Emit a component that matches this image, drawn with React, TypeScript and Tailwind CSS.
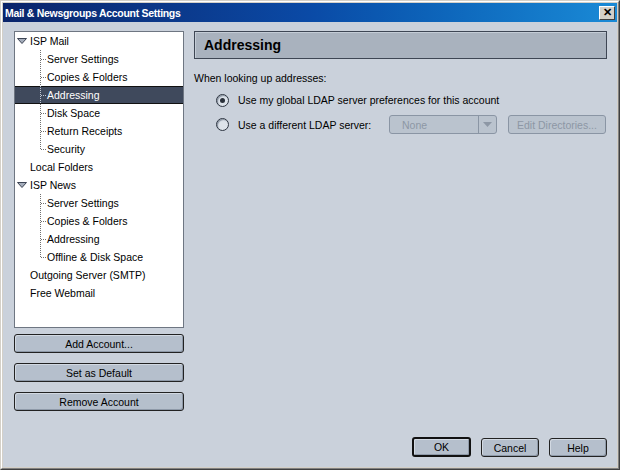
import React from 'react'

type TreeItem = {
  label: string
  level: 0 | 1
  expanded?: boolean
  last?: boolean
  selected?: boolean
}

const tree: TreeItem[] = [
  { label: 'ISP Mail', level: 0, expanded: true },
  { label: 'Server Settings', level: 1 },
  { label: 'Copies & Folders', level: 1 },
  { label: 'Addressing', level: 1, selected: true },
  { label: 'Disk Space', level: 1 },
  { label: 'Return Receipts', level: 1 },
  { label: 'Security', level: 1, last: true },
  { label: 'Local Folders', level: 0 },
  { label: 'ISP News', level: 0, expanded: true },
  { label: 'Server Settings', level: 1 },
  { label: 'Copies & Folders', level: 1 },
  { label: 'Addressing', level: 1 },
  { label: 'Offline & Disk Space', level: 1, last: true },
  { label: 'Outgoing Server (SMTP)', level: 0 },
  { label: 'Free Webmail', level: 0 },
]

function Twisty() {
  return (
    <svg width="10" height="6" viewBox="0 0 10 6" className="shrink-0">
      <polygon points="0.5,0.5 9.5,0.5 5,5.5" fill="#a4adbb" stroke="#3c4454" strokeWidth="1" />
    </svg>
  )
}

function Connector({ last, light }: { last?: boolean; light?: boolean }) {
  const color = light ? '#c0c8d4' : '#707070'
  return (
    <svg width="6" height="18" viewBox="0 0 6 18" className="shrink-0">
      <line x1="0.5" y1="0" x2="0.5" y2={last ? 9 : 18} stroke={color} strokeDasharray="1 1" />
      <line x1="1" y1="9.5" x2="6" y2="9.5" stroke={color} strokeDasharray="1 1" />
    </svg>
  )
}

function TreeRow({ item }: { item: TreeItem }) {
  const base = 'flex h-[18px] items-center whitespace-nowrap'
  const sel = item.selected
    ? 'bg-[#3f495c] text-white border-y border-[#111]'
    : 'text-black'

  if (item.level === 1) {
    return (
      <div className={`${base} ${sel} pl-[25px]`}>
        <Connector last={item.last} light={item.selected} />
        <span className="ml-px">{item.label}</span>
      </div>
    )
  }

  return (
    <div className={`${base} ${sel} ${item.expanded ? 'pl-[2px]' : 'pl-[15px]'}`}>
      {item.expanded && <Twisty />}
      <span className={item.expanded ? 'ml-[3px]' : ''}>{item.label}</span>
    </div>
  )
}

function Button({
  children,
  className = '',
  isDefault = false,
}: {
  children: React.ReactNode
  className?: string
  isDefault?: boolean
}) {
  return (
    <button
      type="button"
      className={`flex items-center justify-center rounded-[3px] bg-[#b5bfcc] text-black shadow-[inset_1px_1px_0_#d2d9e2,inset_-1px_-1px_0_#8e99a8] ${
        isDefault ? 'border-2 border-[#111]' : 'border border-[#222]'
      } ${className}`}
    >
      {children}
    </button>
  )
}

function Radio({ checked }: { checked?: boolean }) {
  return (
    <span className="flex h-[13px] w-[13px] shrink-0 items-center justify-center rounded-full border border-[#2c3440] bg-[#dde3ea] shadow-[inset_1px_1px_1px_#8a94a2]">
      {checked && <span className="h-[5px] w-[5px] rounded-full bg-[#2a303a]" />}
    </span>
  )
}

export default function App() {
  return (
    <div className="h-[470px] w-[620px] font-['Liberation_Sans',Arial,sans-serif] text-[10.5px] leading-[14px]">
      <div className="flex h-full flex-col border border-t-[#d4d0c8] border-l-[#d4d0c8] border-r-[#404040] border-b-[#404040]">
        <div className="flex flex-1 flex-col border border-t-white border-l-white border-r-[#808080] border-b-[#808080] bg-[#d4d0c8] p-px">
          {/* title bar */}
          <div className="flex h-[19px] shrink-0 items-center justify-between bg-gradient-to-r from-[#0a246a] via-[#0a4aa6] to-[#1a8ad6] pl-[2px] pr-[2px]">
            <span className="text-[10.5px] font-bold tracking-[-0.3px] text-white">Mail &amp; Newsgroups Account Settings</span>
            <span className="flex h-[14px] w-[16px] items-center justify-center border border-t-white border-l-white border-r-[#404040] border-b-[#404040] bg-[#d4d0c8] text-[11px] font-bold leading-none text-black">
              ✕
            </span>
          </div>

          {/* body */}
          <div className="flex flex-1 bg-[#cad1db] pb-[10px] pl-[11px] pr-[10px] pt-[9px]">
            <div className="flex w-[170px] shrink-0 flex-col">
              <div className="h-[297px] border border-[#6e7682] bg-white">
                {tree.map((item, i) => (
                  <TreeRow key={i} item={item} />
                ))}
              </div>
              <Button className="mt-[6px] h-[19px] w-full">Add Account...</Button>
              <Button className="mt-[10px] h-[19px] w-full">Set as Default</Button>
              <Button className="mt-[10px] h-[19px] w-full">Remove Account</Button>
            </div>

            <div className="ml-[10px] flex flex-1 flex-col">
              <div className="flex h-[28px] items-center border border-[#3e4654] bg-[#a9b2be] pl-[9px] shadow-[inset_1px_1px_0_#c4ccd6]">
                <span className="text-[14px] font-bold text-black">Addressing</span>
              </div>

              <div className="mt-[12px] h-[14px] text-black">When looking up addresses:</div>

              <div className="mt-[7px] flex h-[16px] items-center pl-[22px]">
                <Radio checked />
                <span className="ml-[9px]">Use my global LDAP server preferences for this account</span>
              </div>

              <div className="mt-[7px] flex h-[19px] items-center pl-[22px]">
                <Radio />
                <span className="ml-[9px] w-[151px]">Use a different LDAP server:</span>
                <div className="flex h-[19px] w-[108px] items-stretch rounded-[3px] border border-[#8a95a4] bg-[#bac3ce] text-[#8d97a5]">
                  <span className="flex flex-1 items-center pl-[12px]">None</span>
                  <span className="flex w-[18px] items-center justify-center border-l border-[#8a95a4]">
                    <svg width="9" height="5" viewBox="0 0 9 5">
                      <polygon points="0,0 9,0 4.5,5" fill="#8d97a5" />
                    </svg>
                  </span>
                </div>
                <div className="ml-[11px] flex h-[19px] w-[98px] items-center justify-center rounded-[3px] border border-[#8a95a4] bg-[#bac3ce] text-[#8d97a5]">
                  Edit Directories...
                </div>
              </div>

              <div className="flex-1" />

              <div className="flex justify-end">
                <Button isDefault className="h-[20px] w-[59px]">OK</Button>
                <Button className="ml-[10px] mt-px h-[19px] w-[58px]">Cancel</Button>
                <Button className="ml-[10px] mt-px h-[19px] w-[58px]">Help</Button>
              </div>
            </div>
          </div>
        </div>
      </div>
    </div>
  )
}
